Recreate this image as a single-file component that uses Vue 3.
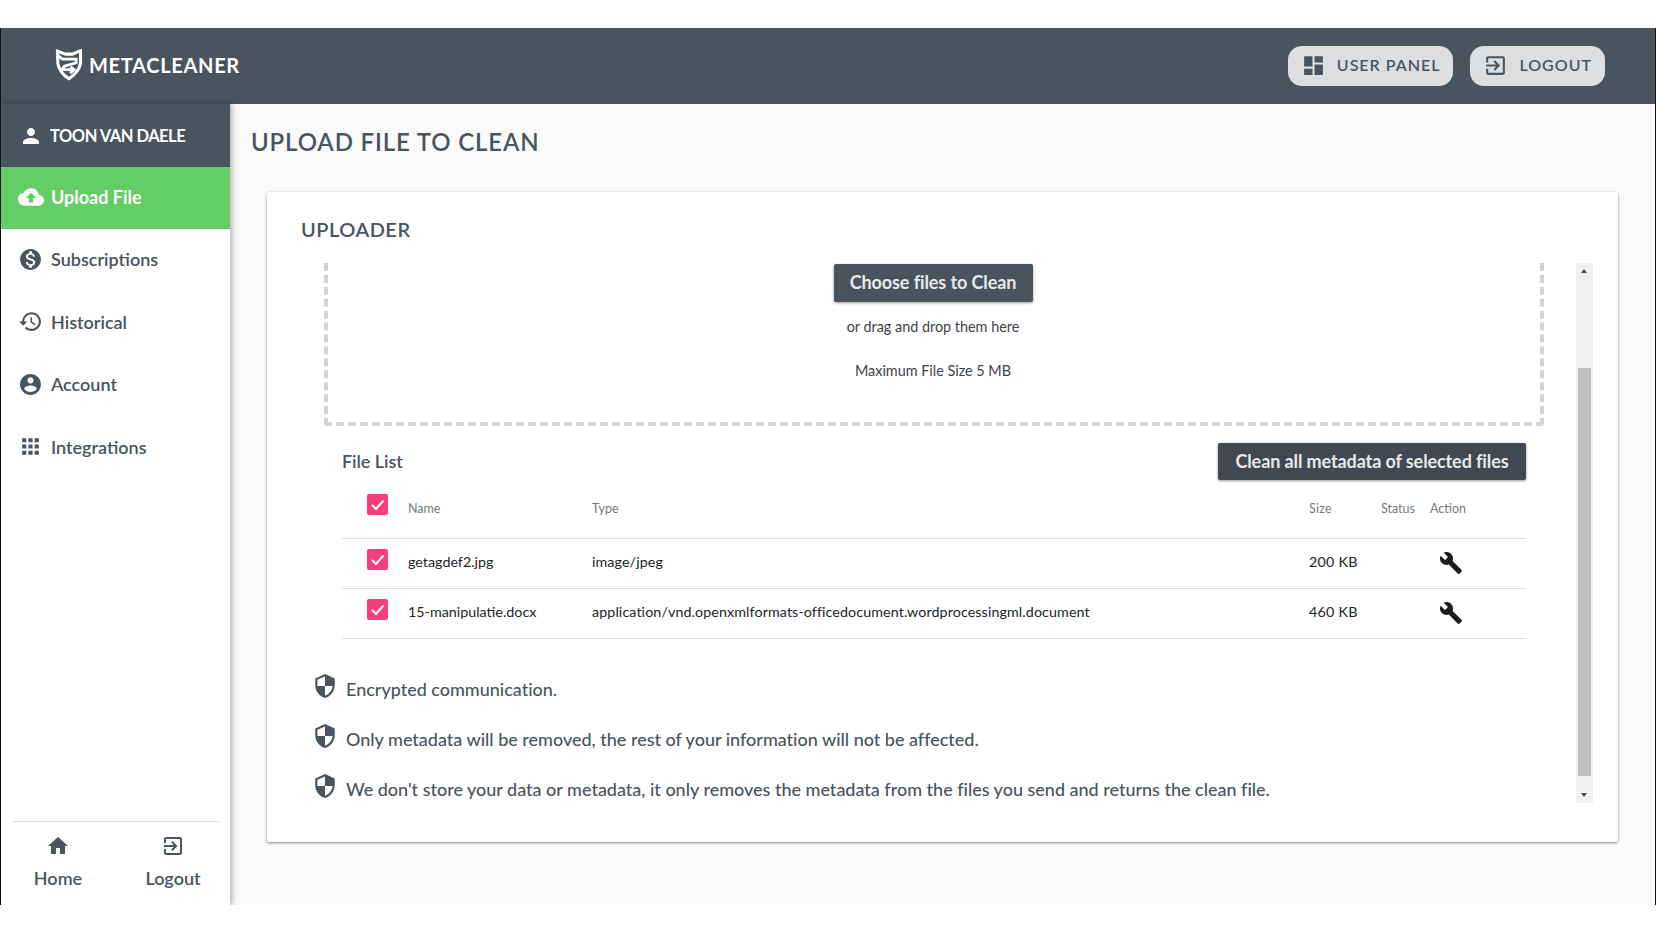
<script setup>
const icons = {
  person: 'M12 12c2.21 0 4-1.79 4-4s-1.79-4-4-4-4 1.79-4 4 1.79 4 4 4zm0 2c-2.67 0-8 1.34-8 4v2h16v-2c0-2.66-5.33-4-8-4z',
  cloud: 'M19.35 10.04C18.67 6.59 15.64 4 12 4 9.11 4 6.6 5.64 5.35 8.04 2.34 8.36 0 10.91 0 14c0 3.31 2.69 6 6 6h13c2.76 0 5-2.24 5-5 0-2.64-2.05-4.78-4.65-4.96zM14 13v4h-4v-4H7l5-5 5 5h-3z',
  money: 'M12 2C6.48 2 2 6.48 2 12s4.48 10 10 10 10-4.48 10-10S17.52 2 12 2zm1.41 16.09V20h-2.67v-1.93c-1.71-.36-3.16-1.46-3.27-3.4h1.96c.1 1.05.82 1.87 2.65 1.87 1.96 0 2.4-.98 2.4-1.59 0-.83-.44-1.61-2.67-2.14-2.48-.6-4.18-1.62-4.18-3.67 0-1.72 1.39-2.84 3.11-3.21V4h2.67v1.95c1.86.45 2.79 1.86 2.85 3.39H14.3c-.05-1.11-.64-1.87-2.22-1.87-1.5 0-2.4.68-2.4 1.64 0 .84.65 1.39 2.67 1.91s4.18 1.39 4.18 3.91c-.01 1.83-1.38 2.83-3.12 3.16z',
  history: 'M13 3c-4.97 0-9 4.03-9 9H1l3.89 3.89.07.14L9 12H6c0-3.87 3.13-7 7-7s7 3.13 7 7-3.13 7-7 7c-1.93 0-3.68-.79-4.94-2.06l-1.42 1.42C8.27 19.99 10.51 21 13 21c4.97 0 9-4.03 9-9s-4.03-9-9-9zm-1 5v5l4.28 2.54.72-1.21-3.5-2.08V8H12z',
  account: 'M12 2C6.48 2 2 6.48 2 12s4.48 10 10 10 10-4.48 10-10S17.52 2 12 2zm0 3c1.66 0 3 1.34 3 3s-1.34 3-3 3-3-1.34-3-3 1.34-3 3-3zm0 14.2c-2.5 0-4.71-1.28-6-3.22.03-1.99 4-3.08 6-3.08 1.99 0 5.97 1.09 6 3.08-1.29 1.94-3.5 3.22-6 3.22z',
  apps: 'M4 8h4V4H4v4zm6 12h4v-4h-4v4zm-6 0h4v-4H4v4zm0-6h4v-4H4v4zm6 0h4v-4h-4v4zm6-10v4h4V4h-4zm-6 4h4V4h-4v4zm6 6h4v-4h-4v4zm0 6h4v-4h-4v4z',
  dashboard: 'M3 13h8V3H3v10zm0 8h8v-6H3v6zm10 0h8V11h-8v10zm0-18v6h8V3h-8z',
  exit: 'M10.09 15.59L11.5 17l5-5-5-5-1.41 1.41L12.67 11H3v2h9.67l-2.58 2.59zM19 3H5c-1.11 0-2 .9-2 2v4h2V5h14v14H5v-4H3v4c0 1.1.89 2 2 2h14c1.1 0 2-.9 2-2V5c0-1.1-.9-2-2-2z',
  home: 'M10 20v-6h4v6h5v-8h3L12 3 2 12h3v8z',
  build: 'M22.7 19l-9.1-9.1c.9-2.3.4-5-1.5-6.9-2-2-5-2.4-7.4-1.3L9 6 6 9 1.6 4.7C.4 7.1.9 10.1 2.9 12.1c1.9 1.9 4.6 2.4 6.9 1.5l9.1 9.1c.4.4 1 .4 1.4 0l2.3-2.3c.5-.4.5-1.1.1-1.4z',
  shield: 'M12 1L3 5v6c0 5.55 3.84 10.74 9 12 5.16-1.26 9-6.45 9-12V5l-9-4zm0 10.99h7c-.53 4.12-3.28 7.79-7 8.94V12H5V6.3l7-3.11v8.8z'
}
const nav = [
  { label: 'Subscriptions', icon: 'money' },
  { label: 'Historical', icon: 'history' },
  { label: 'Account', icon: 'account' },
  { label: 'Integrations', icon: 'apps' }
]
const files = [
  { name: 'getagdef2.jpg', type: 'image/jpeg', size: '200 KB' },
  { name: '15-manipulatie.docx', type: 'application/vnd.openxmlformats-officedocument.wordprocessingml.document', size: '460 KB' }
]
const notes = [
  'Encrypted communication.',
  'Only metadata will be removed, the rest of your information will not be affected.',
  "We don't store your data or metadata, it only removes the metadata from the files you send and returns the clean file."
]
</script>

<template>
  <div class="page">
    <header class="topbar">
      <div class="brand">
        <svg class="logo" viewBox="10 6 90 100" width="28" height="32">
          <path d="M18 12L44 21H66L92 10V50Q88 78 55 100Q24 80 19 50Z" fill="none" stroke="#fff" stroke-width="10" stroke-linejoin="miter"/>
          <path d="M20 26L34 37H78V49L40 60L32 71H72M60 62L72 71L58 82" fill="none" stroke="#fff" stroke-width="9"/>
        </svg>
        <span>METACLEANER</span>
      </div>
      <div class="top-actions">
        <button class="pill"><svg viewBox="0 0 24 24" width="25" height="25"><path :d="icons.dashboard"/></svg>USER PANEL</button>
        <button class="pill"><svg viewBox="0 0 24 24" width="25" height="25"><path :d="icons.exit"/></svg>LOGOUT</button>
      </div>
    </header>
    <div class="body">
      <aside class="sidebar">
        <div class="user"><svg viewBox="0 0 24 24" width="24" height="24"><path :d="icons.person"/></svg>TOON VAN DAELE</div>
        <div class="nav-item active"><svg viewBox="0 0 24 24" width="26" height="26"><path :d="icons.cloud"/></svg>Upload File</div>
        <div v-for="n in nav" :key="n.label" class="nav-item"><svg viewBox="0 0 24 24" width="25" height="25"><path :d="icons[n.icon]"/></svg>{{ n.label }}</div>
        <div class="side-foot">
          <div class="foot-link"><svg viewBox="0 0 24 24" width="24" height="24"><path :d="icons.home"/></svg>Home</div>
          <div class="foot-link"><svg viewBox="0 0 24 24" width="24" height="24"><path :d="icons.exit"/></svg>Logout</div>
        </div>
      </aside>
      <main class="main">
        <h1>UPLOAD FILE TO CLEAN</h1>
        <section class="card">
          <h2>UPLOADER</h2>
          <div class="scroll-area">
            <div class="content">
              <div class="drop">
                <button class="dark choose">Choose files to Clean</button>
                <p class="p1">or drag and drop them here</p>
                <p class="p2">Maximum File Size 5 MB</p>
              </div>
              <div class="list-head">
                <span class="list-title">File List</span>
                <button class="dark clean">Clean all metadata of selected files</button>
              </div>
              <div class="row head">
                <span class="cell-check"><span class="check"><svg viewBox="0 0 21 21" width="21" height="21"><path d="M5 11l4 4 7.500-8.500" /></svg></span></span>
                <span class="c-name">Name</span><span class="c-type">Type</span><span class="c-size">Size</span><span class="c-status">Status</span><span class="c-action">Action</span>
              </div>
              <div v-for="f in files" :key="f.name" class="row">
                <span class="cell-check"><span class="check"><svg viewBox="0 0 21 21" width="21" height="21"><path d="M5 11l4 4 7.500-8.500" /></svg></span></span>
                <span class="c-name">{{ f.name }}</span><span class="c-type">{{ f.type }}</span><span class="c-size">{{ f.size }}</span><span class="c-status"></span>
                <span class="c-action"><svg class="wrench" viewBox="0 0 24 24" width="24" height="24"><path :d="icons.build"/></svg></span>
              </div>
              <ul class="notes">
                <li v-for="n in notes" :key="n"><svg viewBox="0 0 24 24" width="26" height="26"><path :d="icons.shield"/></svg><span>{{ n }}</span></li>
              </ul>
            </div>
            <div class="scrollbar">
              <span class="arrow up"></span>
              <span class="thumb"></span>
              <span class="arrow down"></span>
            </div>
          </div>
        </section>
      </main>
    </div>
  </div>
</template>

<style>
html, body { margin: 0; background: #fff; }
</style>

<style scoped>
* { box-sizing: border-box; }
.page {
  margin-top: 28px;
  height: 877px;
  width: 1656px;
  display: flex;
  flex-direction: column;
  border-left: 1px solid #111;
  border-right: 1px solid #111;
  font-family: Lato, "Open Sans", sans-serif;
  color: #4a545e;
  overflow: hidden;
}
svg { fill: currentColor; flex: none; }
.topbar {
  height: 76px;
  flex: none;
  background: #4a545e;
  display: flex;
  justify-content: space-between;
  align-items: center;
  padding: 0 50px 0 54px;
}
.brand {
  display: flex;
  align-items: center;
  gap: 6px;
  color: #fff;
  font-size: 20px;
  font-weight: 700;
  letter-spacing: .7px;
  padding-bottom: 2px;
}
.top-actions { display: flex; gap: 17px; }
.pill {
  height: 40px;
  border: 0;
  border-radius: 14px;
  background: #dcdee0;
  color: #4a545e;
  font: 600 16px Lato, sans-serif;
  letter-spacing: 1px;
  display: flex;
  align-items: center;
  gap: 11px;
  padding: 0 13px 3px 13px;
}
.pill svg { margin-bottom: -2px; }
.body { flex: 1; display: flex; min-height: 0; }
.sidebar {
  width: 229px;
  flex: none;
  background: #fff;
  display: flex;
  flex-direction: column;
  box-shadow: 2px 0 6px rgba(0,0,0,.3);
  position: relative;
  z-index: 1;
}
.user {
  height: 63px;
  flex: none;
  background: #4a545e;
  color: #fff;
  display: flex;
  align-items: center;
  gap: 7px;
  padding-left: 18px;
  font-size: 16.500px;
  letter-spacing: -.5px;
  font-weight: 700;
}
.nav-item {
  height: 62.500px;
  flex: none;
  display: flex;
  align-items: center;
  gap: 8px;
  padding: 0 0 2px 17px;
  font-size: 18px;
  font-weight: 600;
}
.nav-item.active {
  height: 62px;
  background: #64cd66;
  color: #fff;
  font-weight: 700;
  padding-left: 17px;
  gap: 7px;
}
.side-foot {
  margin: auto 11px 0;
  height: 84px;
  border-top: 1px solid #dedede;
  display: flex;
  justify-content: space-between;
}
.foot-link {
  width: 92px;
  display: flex;
  flex-direction: column;
  align-items: center;
  padding-top: 12px;
  gap: 9px;
  font-size: 18px;
  font-weight: 600;
}
.main {
  flex: 1;
  background: #fafafa;
  padding: 0 36px 0 21px;
  min-width: 0;
}
h1 {
  margin: 23px 0 0;
  height: 30px;
  line-height: 30px;
  font-size: 24px;
  font-weight: 600;
  letter-spacing: .85px;
  color: #4a545e;
}
.card {
  margin: 35px 0 0 16px;
  width: 1351px;
  height: 650px;
  background: #fff;
  border-radius: 2px;
  box-shadow: 0 1px 3px rgba(0,0,0,.45);
  padding: 25px 25px 0 34px;
  display: flex;
  flex-direction: column;
}
h2 {
  margin: 0;
  height: 24px;
  line-height: 24px;
  font-size: 20px;
  font-weight: 600;
  letter-spacing: .5px;
  color: #4a545e;
}
.scroll-area {
  margin-top: 22px;
  height: 540px;
  display: flex;
  gap: 0;
}
.content { flex: 1; min-width: 0; overflow: hidden; }
.scrollbar {
  width: 17px;
  flex: none;
  background: #f0f0f0;
  position: relative;
}
.thumb {
  position: absolute;
  left: 2px;
  right: 2px;
  top: 105px;
  height: 408px;
  background: #bfbfbf;
}
.arrow {
  position: absolute;
  left: 5px;
  width: 0;
  height: 0;
  border-left: 3.500px solid transparent;
  border-right: 3.500px solid transparent;
}
.arrow.up { top: 6px; border-bottom: 4px solid #4a4d55; }
.arrow.down { bottom: 6px; border-top: 4px solid #4a4d55; }
.drop {
  margin-left: 23px;
  width: 1220px;
  height: 163px;
  border: 4px dashed #d4d4d4;
  border-top: 0;
  border-radius: 0 0 4px 4px;
  padding-right: 2px;
  display: flex;
  flex-direction: column;
  align-items: center;
}
.dark {
  border: 0;
  border-radius: 2px;
  color: #e8e9ea;
  font: 700 18px Lato, sans-serif;
  letter-spacing: -.1px;
  padding: 0 0 2px;
  box-shadow: 0 1px 3px rgba(0,0,0,.4);
}
.choose { margin-top: 1px; width: 199px; height: 38px; background: #4a545e; }
.drop p { margin: 0; font-size: 14.400px; line-height: 20px; color: #3e444b; }
.p1 { margin-top: 15px !important; }
.p2 { margin-top: 24px !important; }
.list-head {
  margin-left: 41px;
  width: 1184px;
  margin-top: 17px;
  height: 37px;
  display: flex;
  align-items: center;
  justify-content: space-between;
}
.list-title { font-size: 18px; font-weight: 600; padding-bottom: 2px; letter-spacing: -.05px; }
.clean { width: 308px; height: 37px; background: #414852; }
.row {
  margin-left: 41px;
  width: 1184px;
  height: 50px;
  border-bottom: 1px solid #dfdfdf;
  display: flex;
  align-items: center;
  font-size: 14.300px;
  color: #212529;
  padding-bottom: 4px;
}
.row.head {
  height: 59px;
  font-size: 12.500px;
  color: #77797c;
  padding-bottom: 1px;
}
.row.head .cell-check { margin-bottom: 8px; }
.row .cell-check { margin-bottom: 5px; }
.cell-check { width: 66px; padding-left: 25px; display: flex; }
.check {
  width: 21px;
  height: 21px;
  border-radius: 2px;
  background: #f73d7c;
  display: block;
}
.check svg { fill: none; stroke: #fff; stroke-width: 2; display: block; }
.c-name { width: 184px; }
.c-type { width: 717px; white-space: nowrap; letter-spacing: .09px; }
.c-size { width: 72px; letter-spacing: .25px; }
.c-status { width: 49px; }
.c-action { width: 60px; white-space: nowrap; }
.wrench { color: #1c1c1c; display: block; margin: 2px 0 0 9px; }
.notes {
  list-style: none;
  margin: 25px 0 0;
  padding: 0 0 0 11px;
  font-size: 18px;
  font-weight: 500;
  letter-spacing: -.01px;
}
.notes li {
  height: 50px;
  display: flex;
  align-items: center;
  gap: 8px;
}
.notes svg { margin-bottom: 6px; }
</style>
